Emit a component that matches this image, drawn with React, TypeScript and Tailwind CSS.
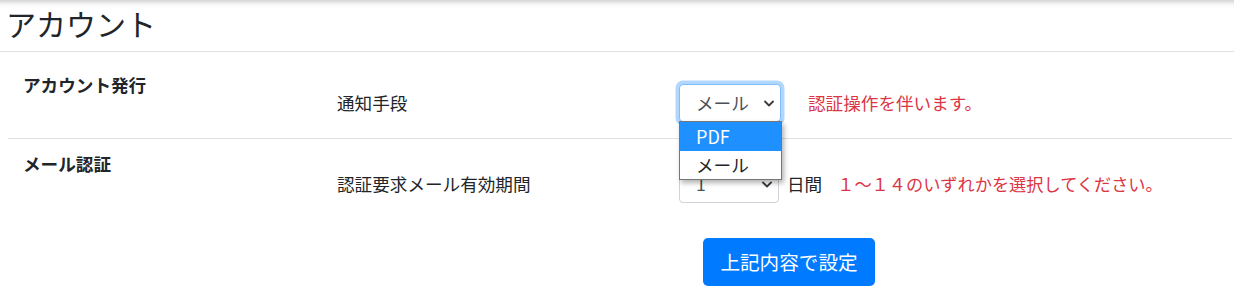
import React from 'react'

const font = { fontFamily: '"Noto Sans CJK JP", "Noto Sans", sans-serif' }

function Chevron({ className }: { className?: string }) {
  return (
    <svg viewBox="0 0 10 6" className={className} fill="none">
      <path d="M1 1l4 4 4-4" stroke="#3c3c3c" strokeWidth="1.8" strokeLinecap="round" strokeLinejoin="round" />
    </svg>
  )
}

export default function App() {
  return (
    <div className="w-[1234px] h-[297px] bg-white text-[#212529] overflow-hidden" style={font}>
      {/* ヘッダー */}
      <div className="h-[52px] border-b border-[#dee2e6] shadow-[inset_0_7px_6px_-6px_rgba(0,0,0,0.28)] pl-[6px] pt-[3px]">
        <h3 className="text-[30px] leading-[40px] font-normal">アカウント</h3>
      </div>

      {/* アカウント発行 */}
      <div className="relative ml-[8px] mr-[2px] h-[87px] border-b border-[#dee2e6] flex">
        <div className="w-[329px] pl-[15px] pt-[20px]">
          <p className="text-[17.6px] leading-[26px] font-bold">アカウント発行</p>
        </div>
        <div className="flex items-start pt-[32px]">
          <div className="w-[342px] h-[38px] flex items-center">
            <span className="text-[17.6px]">通知手段</span>
          </div>
          <div className="w-[102px] h-[38px] rounded-[4px] border border-[#80bdff] ring-[3.5px] ring-[#007bff]/30 flex items-center justify-between pl-[16px] pr-[6px] bg-white">
            <span className="text-[17.6px] text-[#495057]">メール</span>
            <Chevron className="w-[10px] h-[7px]" />
          </div>
          <span className="ml-[27px] h-[38px] flex items-center text-[17.6px] text-[#dc3545]">認証操作を伴います。</span>
        </div>

        {/* 開いたドロップダウン */}
        <div className="absolute left-[671px] top-[69px] z-10 w-[103px] border border-[#767676] bg-white shadow-[2px_3px_5px_rgba(0,0,0,0.3)]">
          <div className="h-[29px] bg-[#1e90ff] text-white pl-[16px] flex items-center text-[18px]">PDF</div>
          <div className="h-[28px] pl-[16px] flex items-center text-[17.6px] text-[#212529]">メール</div>
        </div>
      </div>

      {/* メール認証 */}
      <div className="ml-[8px] flex">
        <div className="w-[329px] pl-[15px] pt-[12px]">
          <p className="text-[17.6px] leading-[26px] font-bold">メール認証</p>
        </div>
        <div className="flex items-start pt-[26px]">
          <div className="w-[342px] h-[38px] flex items-center">
            <span className="text-[17.6px]">認証要求メール有効期間</span>
          </div>
          <div className="w-[100px] h-[38px] rounded-[4px] border border-[#ced4da] flex items-center justify-between pl-[16px] pr-[6px]">
            <span className="text-[17.6px] text-[#495057]">1</span>
            <Chevron className="w-[10px] h-[7px]" />
          </div>
          <span className="ml-[8px] h-[38px] flex items-center text-[17.6px]">日間</span>
          <span className="ml-[15px] h-[38px] flex items-center text-[17.2px] text-[#dc3545]">１～１４のいずれかを選択してください。</span>
        </div>
      </div>

      <div className="pl-[703px] pt-[35px]">
        <button className="w-[172px] h-[48px] rounded-[5px] bg-[#007bff] text-white text-[19.6px]">上記内容で設定</button>
      </div>
    </div>
  )
}
